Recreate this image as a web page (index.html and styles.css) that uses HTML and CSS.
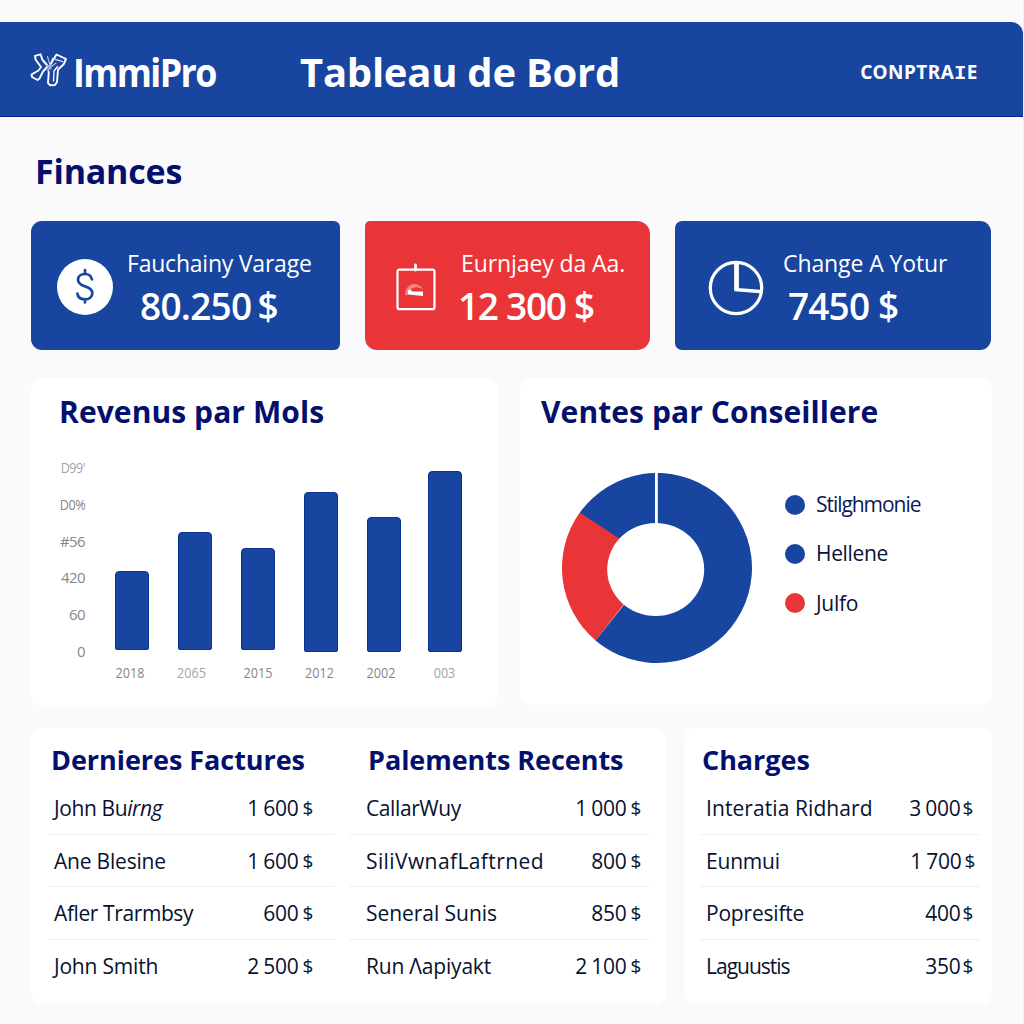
FILE: index.html
```html
<!DOCTYPE html>
<html lang="fr">
<head>
<meta charset="utf-8">
<title>ImmiPro – Tableau de Bord</title>
<link rel="stylesheet" href="styles.css">
</head>
<body>
<div class="app">
  <header class="topbar">
    <div class="brand">
      <svg class="brand-mark" viewBox="0 0 38 36" fill="none" stroke="#fff" stroke-width="1.900" stroke-linejoin="round" stroke-linecap="round">
        <path d="M16.500 12.500 12.500 8 10.500 2.300 5 3.800 5.500 7.500 11 15 8.500 18.500 1.500 22.500 2 25 7.500 28 9.500 26.500 13 19.500 17 15"/>
        <path d="M21 11.500 26.500 2.500 36 7 33.500 12.500 28 17.500 27 30 25 33 20 33.200 18 31 18.800 20"/>
        <path d="M25.500 7.500 32.500 9.500M23.500 29 24 19 27.500 14.500" stroke-width="1.300"/>
        <path d="M17.500 4.500 20 13 18 20M14 9 21 17M26 11 17 18M22.500 6 20 16" stroke-width="1.200" opacity=".65"/>
      </svg>
      <span class="brand-name">ImmiPro</span>
    </div>
    <h1 class="page-title">Tableau de Bord</h1>
    <a class="account">CONPTRA<span class="slab">I</span>E</a>
  </header>

  <main class="content">
    <h2 class="section-title">Finances</h2>

    <section class="stats">
      <article class="stat stat-revenue">
        <svg class="stat-icon" width="56" height="56" viewBox="0 0 56 56" fill="none">
          <circle cx="28" cy="28" r="28" fill="#fff"/>
          <path d="M35 20.500C34.200 16.500 31.500 15 28 15c-4 0-7 2.200-7 5.800 0 4 3.300 5.400 7 6.600 4.200 1.300 7.300 2.800 7.300 6.800 0 3.800-3.200 6.100-7.300 6.100-4.300 0-7.200-2-7.600-5.800M28 11v4M28 40.500v3" stroke="#17459f" stroke-width="2.700" stroke-linecap="round"/>
        </svg>
        <div class="stat-text">
          <div class="stat-label">Fauchainy Varage</div>
          <div class="stat-value">80.250<span class="currency">$</span></div>
        </div>
      </article>
      <article class="stat stat-expense">
        <svg class="stat-icon" width="40" height="48" viewBox="0 0 40 48" fill="none">
          <rect x="1.500" y="6.700" width="37" height="39.500" rx="2" stroke="#fff" stroke-width="2.200"/>
          <path d="M19.500 1.800V7" stroke="#fff" stroke-width="2.800" stroke-linecap="round"/>
          <path d="M9 32C9 23 18 16 27.500 26L20 24 13 27 12 32Z" fill="#fff" opacity=".4"/>
          <path d="M12 27.500C14 25.500 15.500 27 16 28.500H27V33L12 31.500Z" fill="#fff"/>
        </svg>
        <div class="stat-text">
          <div class="stat-label">Eurnjaey da Aa.</div>
          <div class="stat-value">12 300 $</div>
        </div>
      </article>
      <article class="stat stat-change">
        <svg class="stat-icon" width="56" height="56" viewBox="0 0 56 56" fill="none" stroke="#fff">
          <circle cx="28" cy="28" r="25.700" stroke-width="3.200"/>
          <path d="M28.500 3V30" stroke-width="4.800"/>
          <path d="M26.500 29.500 52 31.500" stroke-width="3.600"/>
        </svg>
        <div class="stat-text">
          <div class="stat-label">Change A Yotur</div>
          <div class="stat-value">7450 $</div>
        </div>
      </article>
    </section>

    <section class="charts">
      <article class="card chart-card">
        <h3 class="card-title">Revenus par Mols</h3>
        <div class="bar-chart">
          <div class="y-axis"><span class="faint narrow">D99'</span><span class="narrow">D0%</span><span>#56</span><span>420</span><span>60</span><span>0</span></div>
          <div class="bars">
            <i class="bar short" style="height:79px"></i>
            <i class="bar short" style="height:118px"></i>
            <i class="bar short" style="height:102px"></i>
            <i class="bar" style="height:160px"></i>
            <i class="bar" style="height:135.500px"></i>
            <i class="bar last" style="height:181.500px"></i>
          </div>
          <div class="x-axis"><span>2018</span><span class="faint">2065</span><span>2015</span><span>2012</span><span>2002</span><span class="faint">003</span></div>
        </div>
      </article>
      <article class="card donut-card">
        <h3 class="card-title">Ventes par Conseillere</h3>
        <div class="donut-row">
          <svg class="donut" width="190" height="190" viewBox="0 0 190 190">
            <path d="M17.800 39.600 80 60 80 108 33.500 167.400A95 95 0 0 1 17.800 39.600Z" fill="#ea3538"/>
            <path d="M95 90.500 33.500 167.400A95 95 0 1 0 17.800 39.600Z" fill="#17459f"/>
            <ellipse cx="93.700" cy="96.500" rx="48.500" ry="46.500" fill="#fff"/>
            <rect x="93" y="0" width="2.800" height="52" fill="#fff"/>
          </svg>
          <ul class="legend">
            <li><i class="dot"></i><span class="lg-a">Stilghmonie</span></li>
            <li><i class="dot"></i><span class="lg-b">Hellene</span></li>
            <li><i class="dot dot-red"></i><span class="lg-c">Julfo</span></li>
          </ul>
        </div>
      </article>
    </section>

    <section class="tables">
      <div class="card table-pair">
        <article class="list list-invoices">
          <h3 class="list-title">Dernieres Factures</h3>
          <div class="row"><span class="tight">John Bu<em>irng</em></span><span class="amount">1 600<small>$</small></span></div>
          <div class="row"><span>Ane Blesine</span><span class="amount">1 600<small>$</small></span></div>
          <div class="row"><span class="tight">Afler Trarmbsy</span><span class="amount">600<small>$</small></span></div>
          <div class="row"><span>John Smith</span><span class="amount">2 500<small>$</small></span></div>
        </article>
        <article class="list list-payments">
          <h3 class="list-title">Palements Recents</h3>
          <div class="row"><span class="tight">CallarWuy</span><span class="amount">1 000<small>$</small></span></div>
          <div class="row"><span class="wider">SiliVwnafLaftrned</span><span class="amount">800<small>$</small></span></div>
          <div class="row"><span class="loose">Seneral Sunis</span><span class="amount">850<small>$</small></span></div>
          <div class="row"><span>Run Λapiyakt</span><span class="amount">2 100<small>$</small></span></div>
        </article>
      </div>
      <article class="card list list-charges">
        <h3 class="list-title">Charges</h3>
        <div class="row"><span class="wide">Interatia Ridhard</span><span class="amount">3 000<small>$</small></span></div>
        <div class="row"><span>Eunmui</span><span class="amount shifted">1 700<small>$</small></span></div>
        <div class="row"><span>Popresifte</span><span class="amount">400<small>$</small></span></div>
        <div class="row"><span class="snug">Laguustis</span><span class="amount">350<small>$</small></span></div>
      </article>
    </section>
  </main>
</div>
</body>
</html>
```
FILE: styles.css
```css
* { box-sizing: border-box; margin: 0; padding: 0; }

body {
  background: #fafafc;
  font-family: "Open Sans", "Noto Sans", sans-serif;
  color: #071230;
}

.app {
  width: 1024px;
  height: 1024px;
  padding-top: 22px;
  border-right: 1px solid #eeeef1;
  overflow: hidden;
  white-space: nowrap;
}

/* header */
.topbar {
  display: flex;
  align-items: center;
  height: 95px;
  padding: 5px 0 0 30px;
  background: #17459f;
  border-bottom: 1px solid #04208c;
  border-radius: 0 12px 0 0;
  color: #fff;
}
.brand { display: flex; align-items: center; width: 270px; }
.brand-mark { width: 38px; height: 36px; margin-top: -4px; }
.brand-name {
  margin-left: 5px;
  font-size: 40px;
  line-height: 56px;
  font-weight: 700;
  letter-spacing: -1.8px;
  transform: scaleX(.895);
  transform-origin: left;
}
.page-title {
  flex: 1;
  font-size: 40px;
  line-height: 56px;
  font-weight: 700;
  letter-spacing: -.25px;
}
.account {
  margin-right: 45px;
  font-family: "Noto Sans", sans-serif;
  font-size: 19px;
  font-weight: 700;
  letter-spacing: .5px;
}
.slab { font-family: "Liberation Mono", monospace; font-size: 20px; line-height: 1; }

.content { padding: 30px 31px 0; }
.section-title {
  margin: 0 0 26px 4px;
  font-size: 34px;
  line-height: 48px;
  color: #03106c;
  letter-spacing: -.2px;
}

/* key figures */
.stats { display: grid; grid-template-columns: 309px 285px 316px; gap: 25px; }
.stat { display: flex; height: 129px; color: #fff; background: #17459f; border-radius: 8px; }
.stat-revenue { border-radius: 11px 6px 6px 11px; padding-left: 26px; }
.stat-expense { background: #ea3538; border-radius: 5px 13px 13px 12px; padding-left: 31px; }
.stat-change { border-radius: 7px 11px 11px 7px; padding-left: 33px; }
.stat-icon { flex: none; margin-top: 38px; }
.stat-expense .stat-icon { margin-top: 42px; }
.stat-change .stat-icon { margin-top: 39px; }
.stat-text { padding-top: 27px; }
.stat-revenue .stat-text { padding-left: 14px; }
.stat-expense .stat-text { padding-left: 25px; }
.stat-change .stat-text { padding-left: 19px; }
.stat-label { font-size: 23px; line-height: 30px; letter-spacing: -.1px; }
.stat-revenue .stat-label { letter-spacing: -.22px; }
.stat-value { margin-top: 3px; font-size: 37px; line-height: 50px; font-weight: 600; letter-spacing: -.75px; }
.stat-revenue .stat-value { padding-left: 13px; }
.stat-expense .stat-value { margin-left: -3px; letter-spacing: -1.29px; }
.stat-change .stat-value { padding-left: 5px; letter-spacing: -.86px; }
.currency { margin-left: 6px; }

/* cards */
.card { background: #fff; border-radius: 12px; }
.card-title { font-size: 30px; line-height: 40px; color: #03106c; letter-spacing: .08px; }

.charts { display: grid; grid-template-columns: 467px 472px; gap: 22px; margin-top: 28px; align-items: start; }
.chart-card { height: 329px; padding: 14px 0 0 28px; }
.donut-card { height: 327px; padding: 14px 0 0 21px; }

/* bar chart */
.bar-chart {
  display: grid;
  grid-template-columns: 27px 346px;
  column-gap: 30px;
  margin: 17px 0 0 -1px;
  font-size: 15px;
  color: #85868c;
}
.y-axis { display: flex; flex-direction: column; align-items: flex-end; letter-spacing: -.6px; }
.y-axis span { height: 36.800px; line-height: 37px; }
.y-axis .narrow { transform: scaleX(.84); transform-origin: right; }
.bars { display: flex; align-items: flex-end; gap: 28.900px; height: 203px; }
.bar { flex: none; width: 34px; background: #17459f; border: 1px solid #083393; border-radius: 4px 4px 2px 2px; }
.bar.short { margin-bottom: 2px; }
.bar.last { margin-left: -1.500px; }
.x-axis {
  grid-column: 1 / -1;
  display: grid;
  grid-template-columns: 62px 61px 72px 51px 72px 55px;
  margin: -8px 0 0 41px;
  line-height: 20px;
  text-align: center;
}
.x-axis span { transform: scaleX(.84); }
.faint { opacity: .75; }

/* donut */
.donut-row { display: flex; padding: 41px 0 0 21px; }
.legend { list-style: none; margin: 7px 0 0 33px; font-size: 21px; line-height: 49.300px; color: #0b1a55; }
.legend li { display: flex; align-items: center; height: 49.300px; }
.dot { width: 20px; height: 20px; margin-right: 11px; border-radius: 50%; background: #17459f; }
.dot-red { background: #ea3538; }
.lg-a { letter-spacing: -1.05px; }
.lg-b { letter-spacing: -.35px; color: #071230; }
.lg-c { letter-spacing: -.3px; color: #071230; }

/* lists */
.tables { display: grid; grid-template-columns: 635px 308px; gap: 18px; margin-top: 21px; }
.table-pair { display: flex; gap: 14px; height: 276px; padding-left: 17px; }
.list { padding-top: 14px; }
.list-invoices { width: 287px; }
.list-payments { width: 300px; }
.list-charges { height: 276px; padding-left: 16px; padding-right: 12px; }
.list-title { margin: 0 0 4px 3px; font-size: 27px; line-height: 36px; color: #03106c; letter-spacing: -.05px; }
.list-charges .list-title { margin-left: 2px; }
.list-payments .list-title { margin-left: 19px; }
.row {
  display: flex;
  justify-content: space-between;
  align-items: center;
  height: 52.600px;
  padding-top: 1px;
  border-bottom: 1px solid #f0f0f3;
  font-size: 21px;
  letter-spacing: -.2px;
}
.row:last-child { border-bottom-color: transparent; }
.list-invoices .row { padding-left: 6px; padding-right: 22px; }
.list-payments .row { padding-left: 17px; padding-right: 8px; }
.list-charges .row { padding-left: 6px; padding-right: 7px; }
.amount { letter-spacing: -.3px; word-spacing: -.700px; }
.amount small { margin-left: 4px; font-size: 19px; position: relative; top: -1px; }
.list-charges .amount small { margin-left: 2px; }
.list-charges .shifted { margin-right: -2px; }
.list-charges .shifted small { margin-left: 3px; }
.tight { letter-spacing: -.4px; }
.snug { letter-spacing: -1px; }
.loose { letter-spacing: -.05px; }
.wide { letter-spacing: .08px; }
.wider { letter-spacing: .4px; }
```
